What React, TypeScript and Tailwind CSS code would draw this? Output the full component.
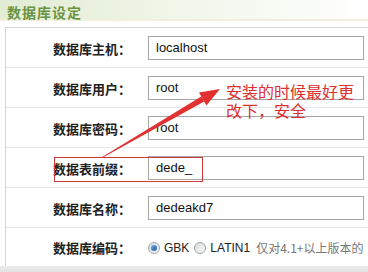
import React from "react";

const cjk = { fontFamily: '"Noto Sans CJK SC", "Noto Sans", sans-serif' };
const latin = { fontFamily: '"Liberation Sans", Arial, "Noto Sans CJK SC", sans-serif' };

type Row = { label: string; value?: string };

const rows: Row[] = [
  { label: "数据库主机：", value: "localhost" },
  { label: "数据库用户：", value: "root" },
  { label: "数据库密码：", value: "root" },
  { label: "数据表前缀：", value: "dede_" },
  { label: "数据库名称：", value: "dedeakd7" },
];

function Radio({ checked }: { checked?: boolean }) {
  return (
    <span className="flex h-[12px] w-[12px] shrink-0 items-center justify-center rounded-full border border-[#9ca3a8] bg-gradient-to-br from-[#d8dcdf] to-[#f7f7f7]">
      {checked && (
        <span className="h-[6px] w-[6px] rounded-full bg-gradient-to-br from-[#6fa8e0] to-[#1c5aa8]" />
      )}
    </span>
  );
}

function FieldRow({
  label,
  last,
  children,
}: {
  label: string;
  last?: boolean;
  children: React.ReactNode;
}) {
  return (
    <div
      className={
        last
          ? "flex h-[38px] items-center"
          : "flex h-[40px] items-center border-b border-[#e8e8e8]"
      }
    >
      <div
        className="w-[125px] shrink-0 pt-[2px] text-right text-[13px] font-bold text-[#222]"
        style={cjk}
      >
        {label}
      </div>
      <div className="ml-[17px] flex items-center pt-[1px]">{children}</div>
    </div>
  );
}

export default function App() {
  return (
    <div className="relative flex h-[272px] w-[368px] flex-col overflow-hidden bg-white">
      {/* section header */}
      <div className="h-[21px] border-b-2 border-[#f0f0dc] bg-gradient-to-r from-[#e2ecd3] via-[#f1f6ea] to-white pl-[7px]">
        <span
          className="text-[14px] font-bold leading-[21px] tracking-[1px] text-[#6a9442]"
          style={cjk}
        >
          数据库设定
        </span>
      </div>

      <div className="ml-[5px] mt-[6px] border-l border-t border-[#d6d6d6]">
        {rows.map((r) => (
          <FieldRow key={r.label} label={r.label}>
            <div
              className="flex h-[24px] w-[216px] items-center border border-[#a6a6a6] bg-white pl-[7px] text-[13px] text-[#111]"
              style={latin}
            >
              {r.value}
            </div>
          </FieldRow>
        ))}
        <FieldRow label="数据库编码：" last>
          <div className="flex items-center whitespace-nowrap text-[12px]" style={latin}>
            <Radio checked />
            <span className="ml-[4px] text-[#222]">GBK</span>
            <span className="ml-[5px]">
              <Radio />
            </span>
            <span className="ml-[4px] text-[#222]">LATIN1</span>
            <span className="ml-[6px] text-[#777]" style={cjk}>
              仅对4.1+以上版本的
            </span>
          </div>
        </FieldRow>
      </div>
      <div className="flex-1 bg-gradient-to-b from-[#ececec] to-[#e2e2e2]" />

      {/* annotation: box around the prefix row */}
      <div className="absolute left-[54px] top-[157px] h-[25px] w-[149px] border border-[#d33a3a]" />

      {/* annotation: arrow */}
      <svg
        className="absolute left-0 top-0"
        width="368"
        height="272"
        viewBox="0 0 368 272"
      >
        <polygon
          points="102.6,156.8 103.4,157.2 204.2,101.6 201.2,96.6"
          fill="#e23131"
        />
        <polygon points="220,89 206.4,105.6 199.0,92.6" fill="#e23131" />
      </svg>

      {/* annotation: note */}
      <div
        className="absolute left-[226px] top-[82px] text-[16px] leading-[19px] text-[#dd2f2f]"
        style={cjk}
      >
        安装的时候最好更
        <br />
        改下，安全
      </div>
    </div>
  );
}
